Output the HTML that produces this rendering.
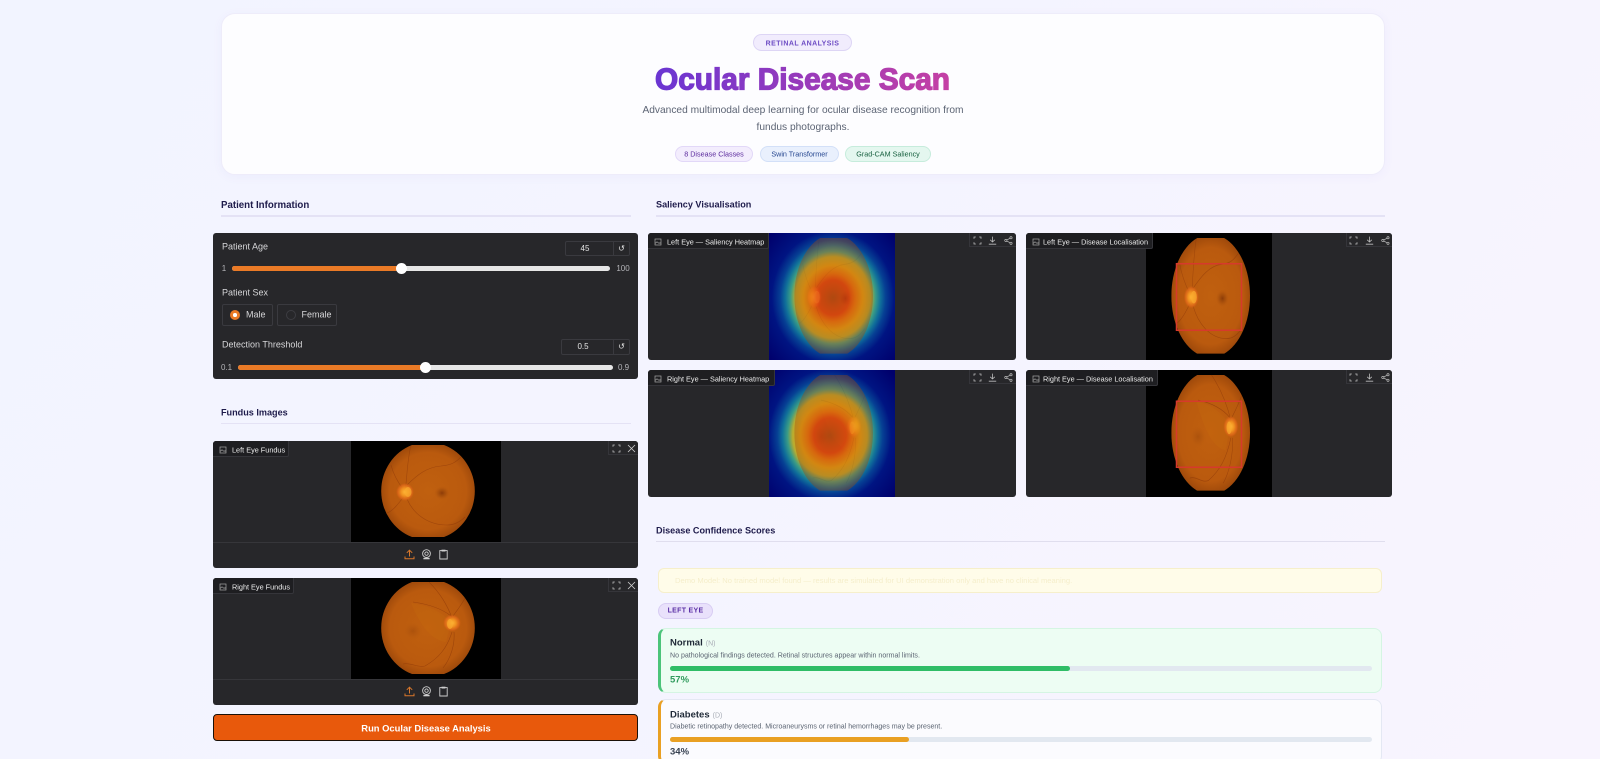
<!DOCTYPE html>
<html lang="en"><head><meta charset="utf-8"><title>Ocular Disease Scan</title>
<style>
*{box-sizing:border-box;margin:0;padding:0}
html,body{width:1600px;height:759px;overflow:hidden}
body{position:relative;font-family:"Liberation Sans",sans-serif;background:linear-gradient(120deg,#f2f4ff 0%,#f4f4ff 45%,#f8f4fe 100%)}
.a{position:absolute}
.t{position:absolute;white-space:nowrap;transform:translateY(-50%);line-height:1}
.c{position:absolute;white-space:nowrap;transform:translate(-50%,-50%);line-height:1}
.hero{left:221px;top:13px;width:1164px;height:162px;background:#fdfdff;border:1px solid #eeecfa;border-radius:14px;box-shadow:0 2px 10px rgba(120,100,220,.05)}
.pill{position:absolute;border-radius:9px;border:1px solid}
.sec{font-size:9.1px;font-weight:700;color:#1e1b4b}
.ln{position:absolute;height:2px;background:#e4e2f5}
.panel{position:absolute;background:#27272a;border-radius:3px;overflow:hidden}
.lab{position:absolute;left:0;top:0;height:16px;background:#1e1e21;border-right:1px solid #35353a;border-bottom:1px solid #35353a;border-bottom-right-radius:2px}
.lab span{position:absolute;left:19px;top:8.5px;transform:translateY(-50%);font-size:7.3px;line-height:1;color:#ececec;white-space:nowrap}
.lab svg{position:absolute;left:6px;top:4.5px}
.acts{position:absolute;top:0;right:0;height:14px;background:#27272a;border-left:1px solid #35353a;border-bottom:1px solid #35353a}
.g{color:#d6d6d8;font-size:8.5px}
.box{position:absolute;border:1px solid #3a3a3f;border-radius:2px}
.track{position:absolute;height:5px;border-radius:3px}
.thumb{position:absolute;width:11px;height:11px;border-radius:50%;background:#fff}
.card{position:absolute;left:658px;width:724px;height:65px;border:1px solid;border-left-width:3px;border-radius:8px}
.bar{position:absolute;left:670px;width:702px;height:5px;border-radius:3px;background:#e2e8f0}
.bar i{display:block;height:5px;border-radius:3px}
.nm{font-size:9.5px;font-weight:700;color:#1f2937}
.nm small{font-size:7px;font-weight:400;color:#a8adb6;margin-left:3px}
.ds{font-size:7.05px;color:#5b6472}
.pc{font-size:9.5px;font-weight:700}
.chip{font-size:7.2px;top:154.4px}
svg{display:block}
</style></head><body>

<svg width="0" height="0" style="position:absolute">
<defs>
<linearGradient id="tg" gradientUnits="userSpaceOnUse" x1="655" y1="0" x2="950" y2="0"><stop offset="0" stop-color="#6a35d2"/><stop offset="1" stop-color="#c540a4"/></linearGradient>
<radialGradient id="ret" gradientUnits="userSpaceOnUse" cx="77" cy="50" r="48"><stop offset="0" stop-color="#c0600f"/><stop offset=".8" stop-color="#ba5a0e"/><stop offset="1" stop-color="#a04a0b"/></radialGradient>
<radialGradient id="dsk"><stop offset="0" stop-color="#ffb838"/><stop offset=".45" stop-color="#f0901f"/><stop offset=".8" stop-color="#e0681a" stop-opacity=".75"/><stop offset="1" stop-color="#d4600f" stop-opacity="0"/></radialGradient>
<radialGradient id="mac"><stop offset="0" stop-color="#8c3c08"/><stop offset=".5" stop-color="#a04a0a" stop-opacity=".6"/><stop offset="1" stop-color="#b85a0e" stop-opacity="0"/></radialGradient>
<radialGradient id="jet" gradientUnits="userSpaceOnUse" cx="64" cy="0" r="85" gradientTransform="translate(0,64) scale(1,1.08)">
<stop offset="0" stop-color="#a53c12"/><stop offset=".09" stop-color="#c43a10"/><stop offset=".19" stop-color="#e03a10"/><stop offset=".26" stop-color="#e8700f"/><stop offset=".35" stop-color="#e2a214"/><stop offset=".44" stop-color="#b8ac30"/><stop offset=".5" stop-color="#3a9c86"/><stop offset=".56" stop-color="#10709a"/><stop offset=".62" stop-color="#064094"/><stop offset=".72" stop-color="#001482"/><stop offset="1" stop-color="#00006c"/>
</radialGradient>
<clipPath id="eye"><path d="M61 4H93A47 49 0 0 1 93 96H61A47 49 0 0 1 61 4Z"/></clipPath>
<g id="retL"><g clip-path="url(#eye)"><rect width="150" height="101" fill="url(#ret)"/><ellipse cx="91" cy="52" rx="8" ry="7" fill="url(#mac)"/>
<g fill="none" stroke="#8f3a0a" stroke-width=".6" opacity=".6"><path d="M54 52C56 38 56 20 60 4"/><path d="M56 44C66 34 76 26 90 25C100 24 104 22 110 16"/><path d="M56 58C62 72 76 84 96 84C104 84 110 80 114 76"/><path d="M54 54C48 62 42 70 36 72"/><path d="M52 48C46 40 42 32 40 24"/></g>
<ellipse cx="54" cy="51" rx="9" ry="9" fill="url(#dsk)"/><ellipse cx="57" cy="51" rx="3.5" ry="5" fill="#f9a92f" opacity=".7"/></g></g>
<g id="retR"><g clip-path="url(#eye)"><rect width="150" height="101" fill="url(#ret)"/><ellipse cx="62" cy="53" rx="10" ry="9" fill="url(#mac)" opacity=".35"/>
<path d="M60 25Q85 28 100 44L95 64Q75 62 60 25Z" fill="#d0760f" opacity=".15"/>
<g fill="none" stroke="#8f3a0a" stroke-width=".6" opacity=".65"><path d="M101 40C96 26 88 14 78 4"/><path d="M100 38C90 30 76 26 62 24"/><path d="M101 54C96 70 88 80 74 88C66 90 60 84 52 86"/><path d="M103 54C104 66 100 80 92 90"/><path d="M102 38C108 30 112 24 114 20"/></g>
<ellipse cx="101" cy="45" rx="9" ry="8.5" fill="url(#dsk)"/><ellipse cx="99" cy="46" rx="3" ry="5" fill="#f9a92f" opacity=".7"/></g></g>
<symbol id="i-img" viewBox="0 0 8 8"><rect x="1" y="1" width="6" height="6" fill="none" stroke="#a8a8a8" stroke-width=".7"/><path d="M1.2 5.4L3 3.8 5 5.4 6 4.7 6.9 5.6" fill="none" stroke="#a8a8a8" stroke-width=".6"/></symbol>
<symbol id="i-full" viewBox="0 0 9 9"><path d="M1 2.8V1H2.8M6.2 1H8V2.8M8 6.2V8H6.2M2.8 8H1V6.2" fill="none" stroke="#bdbdbd" stroke-width=".8"/></symbol>
<symbol id="i-x" viewBox="0 0 9 9"><path d="M1 1L8 8M8 1L1 8" fill="none" stroke="#d0d0d0" stroke-width=".8"/></symbol>
<symbol id="i-dl" viewBox="0 0 9 9"><path d="M4.5 .6V6M2.2 3.8L4.5 6 6.8 3.8M.8 8.2H8.2" fill="none" stroke="#bdbdbd" stroke-width=".8"/></symbol>
<symbol id="i-sh" viewBox="0 0 9 9"><circle cx="1.8" cy="4.5" r="1.1" fill="none" stroke="#bdbdbd" stroke-width=".7"/><circle cx="7" cy="1.7" r="1.1" fill="none" stroke="#bdbdbd" stroke-width=".7"/><circle cx="7" cy="7.3" r="1.1" fill="none" stroke="#bdbdbd" stroke-width=".7"/><path d="M2.9 3.9L5.9 2.3M2.9 5.1L5.9 6.7" stroke="#bdbdbd" stroke-width=".7"/></symbol>
<symbol id="i-up" viewBox="0 0 11 11"><path d="M5.5 7.5V1.2M2.8 3.8L5.5 1.2 8.2 3.8M1 7.5V9.8H10V7.5" fill="none" stroke="#d9772a" stroke-width="1"/></symbol>
<symbol id="i-cam" viewBox="0 0 11 11"><circle cx="5.5" cy="4.6" r="3.9" fill="none" stroke="#cfcfcf" stroke-width=".9"/><circle cx="5.5" cy="4.6" r="1.7" fill="none" stroke="#cfcfcf" stroke-width=".9"/><path d="M2.4 9.6H8.6" stroke="#cfcfcf" stroke-width="1.4"/></symbol>
<symbol id="i-clip" viewBox="0 0 11 11"><path d="M3.5 1.6H1.8V10H9.2V1.6H7.5" fill="none" stroke="#cfcfcf" stroke-width=".9"/><rect x="3.5" y=".7" width="4" height="1.8" fill="#cfcfcf"/></symbol>
</defs>
</svg>

<div class="a hero"></div>
<div class="pill" style="left:753px;top:34px;width:99px;height:17px;background:#f1ecfd;border-color:#ddd5f5"></div>
<div class="c" style="left:802.5px;top:43.5px;font-size:7px;font-weight:700;letter-spacing:.45px;color:#6d4cc4">RETINAL ANALYSIS</div>
<svg class="a" style="left:0;top:0;overflow:visible" width="1600" height="120"><text x="655" y="89.5" font-family="Liberation Sans" font-weight="700" font-size="31" textLength="295" lengthAdjust="spacingAndGlyphs" fill="url(#tg)" stroke="url(#tg)" stroke-width="1.3">Ocular Disease Scan</text></svg>
<div class="c" style="left:803px;top:110.5px;font-size:10.2px;color:#5c6474">Advanced multimodal deep learning for ocular disease recognition from</div>
<div class="c" style="left:803px;top:128px;font-size:10.2px;color:#5c6474">fundus photographs.</div>
<div class="pill" style="left:675px;top:146px;width:78px;height:16px;background:#f3edfd;border-color:#e2d8f8"></div>
<div class="c chip" style="left:714px;color:#5b2a9d">8 Disease Classes</div>
<div class="pill" style="left:760px;top:146px;width:79px;height:16px;background:#e9f0fd;border-color:#d3e0f8"></div>
<div class="c chip" style="left:799.5px;color:#24458f">Swin Transformer</div>
<div class="pill" style="left:845px;top:146px;width:86px;height:16px;background:#e4f7ef;border-color:#c6ecdc"></div>
<div class="c chip" style="left:888px;color:#17603f">Grad-CAM Saliency</div>

<div class="t sec" style="left:221px;top:206px;font-size:9.7px">Patient Information</div>
<div class="ln" style="left:221px;top:215px;width:410px"></div>

<div class="panel" style="left:213px;top:233px;width:425px;height:146px"></div>
<div class="t g" style="left:222px;top:247px;font-size:9px">Patient Age</div>
<div class="box" style="left:565px;top:241px;width:65px;height:15px"></div>
<div class="a" style="left:613px;top:241px;width:1px;height:15px;background:#3a3a3f"></div>
<div class="c" style="left:585px;top:248.5px;font-size:8px;color:#e4e4e4">45</div>
<div class="c" style="left:621.5px;top:248.5px;font-size:8px;color:#e4e4e4;font-family:'DejaVu Sans',sans-serif">↺</div>
<div class="c g" style="left:224px;top:268.5px;font-size:8px;color:#b4b4b8">1</div>
<div class="track" style="left:232px;top:265.5px;width:378px;background:#e6e6e6"></div>
<div class="track" style="left:232px;top:265.5px;width:169px;background:#ea7a26"></div>
<div class="thumb" style="left:395.5px;top:262.5px"></div>
<div class="c g" style="left:623px;top:268.5px;font-size:8px;color:#b4b4b8">100</div>

<div class="t g" style="left:222px;top:293px;font-size:9px">Patient Sex</div>
<div class="box" style="left:222px;top:304px;width:51px;height:22px"></div>
<div class="a" style="left:230px;top:310px;width:10px;height:10px;border-radius:50%;background:#ea7a26"></div>
<div class="a" style="left:233.2px;top:313.2px;width:3.6px;height:3.6px;border-radius:50%;background:#fff"></div>
<div class="t g" style="left:246px;top:315px;font-size:9px">Male</div>
<div class="box" style="left:277px;top:304px;width:60px;height:22px"></div>
<div class="a" style="left:286px;top:310px;width:10px;height:10px;border-radius:50%;border:1px solid #3d3d42"></div>
<div class="t g" style="left:301.5px;top:315px;font-size:9px">Female</div>

<div class="t g" style="left:222px;top:345px;font-size:9px">Detection Threshold</div>
<div class="box" style="left:561px;top:339px;width:69px;height:15.5px"></div>
<div class="a" style="left:613px;top:339px;width:1px;height:15px;background:#3a3a3f"></div>
<div class="c" style="left:583px;top:346.5px;font-size:8px;color:#e4e4e4">0.5</div>
<div class="c" style="left:621.5px;top:346.5px;font-size:8px;color:#e4e4e4;font-family:'DejaVu Sans',sans-serif">↺</div>
<div class="c g" style="left:226.5px;top:367.5px;font-size:8px;color:#b4b4b8">0.1</div>
<div class="track" style="left:238px;top:364.5px;width:375px;background:#e6e6e6"></div>
<div class="track" style="left:238px;top:364.5px;width:187px;background:#ea7a26"></div>
<div class="thumb" style="left:419.5px;top:361.5px"></div>
<div class="c g" style="left:623.5px;top:367.5px;font-size:8px;color:#b4b4b8">0.9</div>

<div class="t sec" style="left:221px;top:413px">Fundus Images</div>
<div class="ln" style="left:221px;top:423px;width:410px;height:1px"></div>

<div class="panel" style="left:213px;top:441px;width:425px;height:127px">
  <svg class="a" style="left:138px;top:0" width="150" height="101" viewBox="0 0 150 101"><rect width="150" height="101" fill="#000"/><use href="#retL"/></svg>
  <div class="a" style="left:0;top:101px;width:425px;height:1px;background:#36363a"></div>
  <div class="lab" style="width:76px"><svg width="8" height="8"><use href="#i-img" width="8" height="8"/></svg><span>Left Eye Fundus</span></div>
  <div class="acts" style="width:30px"><svg class="a" style="left:2.5px;top:2.5px" width="9" height="9"><use href="#i-full" width="9" height="9"/></svg><svg class="a" style="left:18px;top:2.5px" width="9" height="9"><use href="#i-x" width="9" height="9"/></svg></div>
  <svg class="a" style="left:190.5px;top:108px" width="11" height="11"><use href="#i-up" width="11" height="11"/></svg>
  <svg class="a" style="left:207.5px;top:108px" width="11" height="11"><use href="#i-cam" width="11" height="11"/></svg>
  <svg class="a" style="left:224.5px;top:108px" width="11" height="11"><use href="#i-clip" width="11" height="11"/></svg>
</div>

<div class="panel" style="left:213px;top:578px;width:425px;height:127px">
  <svg class="a" style="left:138px;top:0" width="150" height="101" viewBox="0 0 150 101"><rect width="150" height="101" fill="#000"/><use href="#retR"/></svg>
  <div class="a" style="left:0;top:101px;width:425px;height:1px;background:#36363a"></div>
  <div class="lab" style="width:81px"><svg width="8" height="8"><use href="#i-img" width="8" height="8"/></svg><span>Right Eye Fundus</span></div>
  <div class="acts" style="width:30px"><svg class="a" style="left:2.5px;top:2.5px" width="9" height="9"><use href="#i-full" width="9" height="9"/></svg><svg class="a" style="left:18px;top:2.5px" width="9" height="9"><use href="#i-x" width="9" height="9"/></svg></div>
  <svg class="a" style="left:190.5px;top:108px" width="11" height="11"><use href="#i-up" width="11" height="11"/></svg>
  <svg class="a" style="left:207.5px;top:108px" width="11" height="11"><use href="#i-cam" width="11" height="11"/></svg>
  <svg class="a" style="left:224.5px;top:108px" width="11" height="11"><use href="#i-clip" width="11" height="11"/></svg>
</div>

<div class="a" style="left:213px;top:714px;width:425px;height:27px;background:#e8590c;border:1px solid #1a1008;border-radius:4px"></div>
<div class="c" style="left:426px;top:727.6px;font-size:9.4px;font-weight:700;color:#fff">Run Ocular Disease Analysis</div>

<div class="t sec" style="left:656px;top:205px">Saliency Visualisation</div>
<div class="ln" style="left:656px;top:215px;width:729px"></div>

<div class="panel" style="left:648px;top:233px;width:368px;height:127px">
  <svg class="a" style="left:121px;top:0" width="126" height="127" viewBox="0 0 126 126" preserveAspectRatio="none"><rect width="126" height="126" fill="url(#jet)"/><g opacity=".38"><svg x="0" y="0" width="126" height="126" viewBox="0 0 150 101" preserveAspectRatio="none"><use href="#retL"/></svg></g></svg>
  <div class="lab" style="width:121px"><svg width="8" height="8"><use href="#i-img" width="8" height="8"/></svg><span>Left Eye — Saliency Heatmap</span></div>
  <div class="acts" style="width:47px"><svg class="a" style="left:3px;top:3px" width="9" height="9"><use href="#i-full" width="9" height="9"/></svg><svg class="a" style="left:18px;top:3px" width="9" height="9"><use href="#i-dl" width="9" height="9"/></svg><svg class="a" style="left:34px;top:3px" width="9" height="9"><use href="#i-sh" width="9" height="9"/></svg></div>
</div>

<div class="panel" style="left:1026px;top:233px;width:366px;height:127px">
  <svg class="a" style="left:120px;top:0" width="126" height="127" viewBox="0 0 126 126" preserveAspectRatio="none"><rect width="126" height="126" fill="#000"/><svg x="0" y="0" width="126" height="126" viewBox="0 0 150 101" preserveAspectRatio="none"><use href="#retL"/></svg><rect x="30.5" y="30.5" width="65" height="66" fill="none" stroke="#d63a2c" stroke-width="1.5"/></svg>
  <div class="lab" style="width:127px"><svg width="8" height="8"><use href="#i-img" width="8" height="8"/></svg><span style="left:17px">Left Eye — Disease Localisation</span></div>
  <div class="acts" style="width:46px"><svg class="a" style="left:2px;top:3px" width="9" height="9"><use href="#i-full" width="9" height="9"/></svg><svg class="a" style="left:18px;top:3px" width="9" height="9"><use href="#i-dl" width="9" height="9"/></svg><svg class="a" style="left:34px;top:3px" width="9" height="9"><use href="#i-sh" width="9" height="9"/></svg></div>
</div>

<div class="panel" style="left:648px;top:370px;width:368px;height:127px">
  <svg class="a" style="left:121px;top:0" width="126" height="127" viewBox="0 0 126 126" preserveAspectRatio="none"><g transform="translate(-3,1)"><rect x="-10" y="-10" width="150" height="150" fill="url(#jet)"/></g><g opacity=".38"><svg x="0" y="0" width="126" height="126" viewBox="0 0 150 101" preserveAspectRatio="none"><use href="#retR"/></svg></g></svg>
  <div class="lab" style="width:127px"><svg width="8" height="8"><use href="#i-img" width="8" height="8"/></svg><span>Right Eye — Saliency Heatmap</span></div>
  <div class="acts" style="width:47px"><svg class="a" style="left:3px;top:3px" width="9" height="9"><use href="#i-full" width="9" height="9"/></svg><svg class="a" style="left:18px;top:3px" width="9" height="9"><use href="#i-dl" width="9" height="9"/></svg><svg class="a" style="left:34px;top:3px" width="9" height="9"><use href="#i-sh" width="9" height="9"/></svg></div>
</div>

<div class="panel" style="left:1026px;top:370px;width:366px;height:127px">
  <svg class="a" style="left:120px;top:0" width="126" height="127" viewBox="0 0 126 126" preserveAspectRatio="none"><rect width="126" height="126" fill="#000"/><svg x="0" y="0" width="126" height="126" viewBox="0 0 150 101" preserveAspectRatio="none"><use href="#retR"/></svg><rect x="30.5" y="31" width="65" height="65.5" fill="none" stroke="#d63a2c" stroke-width="1.5"/></svg>
  <div class="lab" style="width:132px"><svg width="8" height="8"><use href="#i-img" width="8" height="8"/></svg><span style="left:17px">Right Eye — Disease Localisation</span></div>
  <div class="acts" style="width:46px"><svg class="a" style="left:2px;top:3px" width="9" height="9"><use href="#i-full" width="9" height="9"/></svg><svg class="a" style="left:18px;top:3px" width="9" height="9"><use href="#i-dl" width="9" height="9"/></svg><svg class="a" style="left:34px;top:3px" width="9" height="9"><use href="#i-sh" width="9" height="9"/></svg></div>
</div>

<div class="t sec" style="left:656px;top:531px">Disease Confidence Scores</div>
<div class="ln" style="left:656px;top:541px;width:729px;height:1px;background:#e0deee"></div>

<div class="a" style="left:658px;top:568px;width:724px;height:25px;background:#fffce9;border:1px solid #f6efcb;border-radius:6px"></div>
<div class="t" style="left:675px;top:580.5px;font-size:7.6px;color:#f5eecb">Demo Model: No trained model found — results are simulated for UI demonstration only and have no clinical meaning.</div>

<div class="pill" style="left:658px;top:603px;width:55px;height:16px;background:#e9e1fb;border-color:#d8cdf3"></div>
<div class="c" style="left:685.5px;top:611px;font-size:7px;font-weight:700;letter-spacing:.3px;color:#5b30a6">LEFT EYE</div>

<div class="card" style="top:628px;background:#edfdf3;border-color:#d5f5e3;border-left-color:#4cc47a"></div>
<div class="t nm" style="left:670px;top:643px">Normal<small>(N)</small></div>
<div class="t ds" style="left:670px;top:656px">No pathological findings detected. Retinal structures appear within normal limits.</div>
<div class="bar" style="top:666px"><i style="width:400px;background:#2fbd66"></i></div>
<div class="t pc" style="left:670px;top:680px;color:#2f9b5c">57%</div>

<div class="card" style="top:699px;background:#fbfbfe;border-color:#e4e8f3;border-left-color:#e9a023"></div>
<div class="t nm" style="left:670px;top:715px">Diabetes<small>(D)</small></div>
<div class="t ds" style="left:670px;top:727px">Diabetic retinopathy detected. Microaneurysms or retinal hemorrhages may be present.</div>
<div class="bar" style="top:737px"><i style="width:239px;background:#e9a023"></i></div>
<div class="t pc" style="left:670px;top:751.5px;color:#374151">34%</div>

</body></html>
